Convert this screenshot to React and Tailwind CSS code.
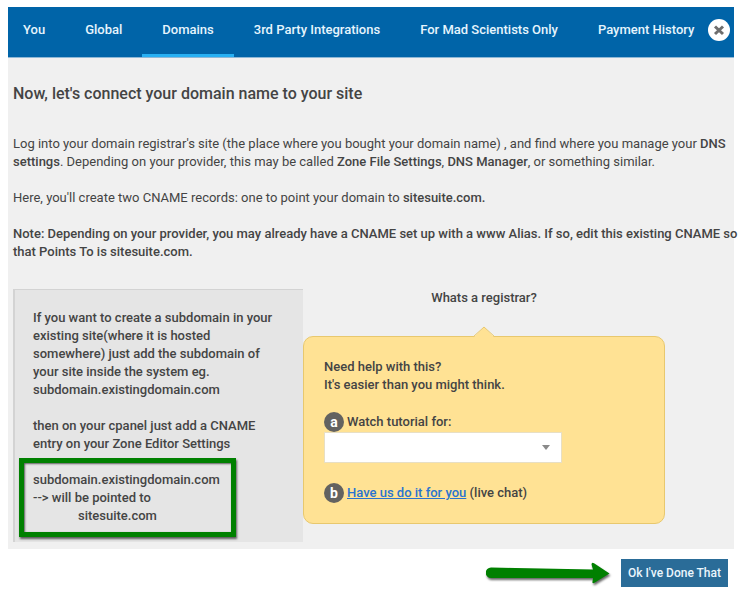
import React, { useState } from "react";

const TABS = [
    "You",
    "Global",
    "Domains",
    "3rd Party Integrations",
    "For Mad Scientists Only",
    "Payment History",
];

function Header({ active, onSelect }) {
    return (
        <header className="flex items-start justify-between bg-[#0064a8] h-[51px] border-b border-[#8fb8d6] pr-[4px]">
            <nav className="flex h-full">
                {TABS.map((tab) => (
                    <button
                        key={tab}
                        type="button"
                        onClick={() => onSelect(tab)}
                        className={`h-full px-5 first:pl-[15px] last:pr-3 pb-[2px] border-b-[3px] text-[13px] leading-[18px] font-medium text-[#e6f5fd] whitespace-nowrap ${
                            active === tab ? "border-[#27b0f3]" : "border-transparent"
                        }`}
                    >
                        {tab}
                    </button>
                ))}
            </nav>
            <button
                type="button"
                aria-label="Close"
                className="mt-3 flex size-[22px] shrink-0 items-center justify-center rounded-full bg-white"
            >
                <svg viewBox="0 0 12 12" className="size-3" stroke="#6e6e6e" strokeWidth="3">
                    <path d="M2 2.500l8 7.500M10 2.500l-8 7.500" />
                </svg>
            </button>
        </header>
    );
}

function Bullet({ children }) {
    return (
        <span className="flex size-5 shrink-0 items-center justify-center rounded-full bg-[#636260] text-[14px] leading-[18px] font-bold text-white">
            {children}
        </span>
    );
}

function SubdomainNote() {
    return (
        <div className="w-[290px] shrink-0 border-t border-l-2 border-[#d3d3d3] bg-[#e5e5e5] pt-[19px] pb-[17px] pl-[18px] pr-5">
            <p>
                If you want to create a subdomain in your existing site(where it is hosted
                somewhere) just add the subdomain of your site inside the system eg.
                subdomain.existingdomain.com
            </p>
            <p className="mt-[18px]">
                then on your cpanel just add a CNAME entry on your Zone Editor Settings
            </p>
            <div className="relative mt-[18px]">
                <p>
                    subdomain.existingdomain.com
                    <br />
                    --&gt; will be pointed to
                </p>
                <p className="pl-[45px]">sitesuite.com</p>
                {/* highlight frame */}
                <div className="absolute -top-[13px] -bottom-3 -left-[14px] w-[217px] border-[5px] border-[#008000] shadow-[1px_2px_2px_#0009,inset_1px_1px_2px_#0009]" />
            </div>
        </div>
    );
}

function HelpBox() {
    return (
        <div className="min-w-0 flex-1">
            <p className="text-center">Whats a registrar?</p>
            <div className="relative mt-[29px] rounded-[10px] border border-[#e8c86e] bg-[#ffe294] px-5 pt-[21px] pb-5">
                <svg viewBox="0 0 22 12" className="absolute -top-[11px] left-1/2 -ml-[11px] h-3 w-[22px]">
                    <path d="M0 12L11 1l11 11z" fill="#ffe294" />
                    <path d="M0 11L11 1l11 10" fill="none" stroke="#e8c86e" strokeWidth="1" />
                </svg>
                <p>Need help with this?</p>
                <p>It's easier than you might think.</p>
                <div className="mt-[18px] flex items-center gap-[3px]">
                    <Bullet>a</Bullet>
                    <label htmlFor="tutorial">Watch tutorial for:</label>
                </div>
                <div className="relative w-[238px]">
                    <select
                        id="tutorial"
                        className="block h-[31px] w-full appearance-none border border-[#e8dfc4] bg-white px-2"
                        defaultValue=""
                    >
                        <option value=""></option>
                    </select>
                    <svg viewBox="0 0 8 5" className="pointer-events-none absolute top-[13px] right-3 h-[5px] w-2">
                        <path d="M0 0h8L4 5z" fill="#8a8a8a" />
                    </svg>
                </div>
                <div className="mt-5 flex items-center gap-[3px]">
                    <Bullet>b</Bullet>
                    <p>
                        <a href="#chat" className="text-[#2a74cf] underline">
                            Have us do it for you
                        </a>{" "}
                        (live chat)
                    </p>
                </div>
            </div>
        </div>
    );
}

function Arrow() {
    return (
        <svg
            viewBox="0 0 126 24"
            className="h-6 w-[126px] drop-shadow-[1px_2px_1px_#0009]"
            fill="#008000"
        >
            <path d="M5 6.500L107 8.500L105.500 3.500Q105.500 1 108 2.200L123.500 12.500L108.500 21.800Q106 23 106.500 20.500L107 17L5 17A5.200 5.200 0 0 1 5 6.500Z" />
        </svg>
    );
}

export default function App() {
    const [active, setActive] = useState("Domains");

    return (
        <div className="bg-white px-2 py-[7px] font-[Roboto,sans-serif] text-[13px] leading-[18px] font-medium text-[#444]">
            <Header active={active} onSelect={setActive} />
            <main className="bg-[#f0f0f0] pt-[25px] pb-[7px] pl-[5px]">
                <h1 className="text-[16px] leading-[22px] font-medium">
                    Now, let's connect your domain name to your site
                </h1>
                <p className="mt-[30px] font-normal">
                    Log into your domain registrar's site (the place where you bought your domain name) , and
                    find where you manage your <span className="font-medium">DNS settings</span>. Depending on
                    your provider, this may be called <span className="font-medium">Zone File Settings</span>,{" "}
                    <span className="font-medium">DNS Manager</span>, or something similar.
                </p>
                <p className="mt-[18px] font-normal">
                    Here, you'll create two CNAME records: one to point your domain to{" "}
                    <span className="font-medium">sitesuite.com.</span>
                </p>
                <p className="mt-[18px] -mr-[6px]">
                    Note: Depending on your provider, you may already have a CNAME set up with a www Alias. If
                    so, edit this existing CNAME so that Points To is sitesuite.com.
                </p>
                <div className="mt-[28px] flex items-start pr-[69px]">
                    <SubdomainNote />
                    <HelpBox />
                </div>
            </main>
            <footer className="flex items-center justify-end gap-[9px] pt-[10px] pr-[6px]">
                <Arrow />
                <button type="button" className="h-7 bg-[#2a6c98] px-[7px] text-[12px] whitespace-nowrap text-[#eaf6fd]">
                    Ok I've Done That
                </button>
            </footer>
        </div>
    );
}
